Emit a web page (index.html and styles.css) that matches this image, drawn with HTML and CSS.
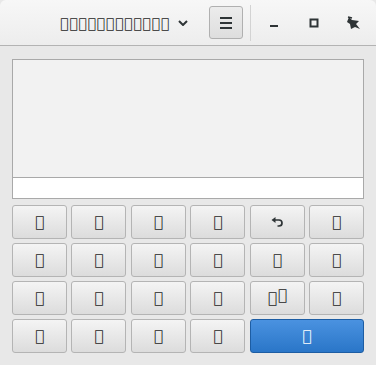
FILE: index.html
```html
<!DOCTYPE html>
<html lang="en">
<head>
    <meta charset="UTF-8">
    <title>Calculator</title>
    <link rel="stylesheet" href="styles.css">
</head>
<body>
    <div class="window">
        <header class="titlebar">
            <div class="title">&#x10FFFD;&#x10FFFD;&#x10FFFD;&#x10FFFD;&#x10FFFD;&#x10FFFD;&#x10FFFD;&#x10FFFD;&#x10FFFD;&#x10FFFD;&#x10FFFD;&#x10FFFD;</div>
            <svg class="chevron" width="10" height="6" viewBox="0 0 10 6"><path d="M1 1 L5 5 L9 1" fill="none" stroke="#2e3436" stroke-width="2"/></svg>
            <button class="menu-button">
                <svg width="12" height="12" viewBox="0 0 12 12"><path d="M0 1h12M0 6h12M0 11h12" stroke="#2e3436" stroke-width="2"/></svg>
            </button>
            <div class="separator"></div>
            <div class="controls">
                <div class="control"><svg width="10" height="10" viewBox="0 0 10 10"><rect x="1" y="7" width="8" height="2" fill="#2e3436"/></svg></div>
                <div class="control"><svg width="10" height="10" viewBox="0 0 10 10"><rect x="1.5" y="1.5" width="7" height="7" fill="none" stroke="#2e3436" stroke-width="2"/></svg></div>
                <div class="control"><svg width="15" height="14" viewBox="0 0 15 14"><path d="M3 1 L6 4 L13 5 L10 8 L14 13 L9 11 L5 13 L4 8 L1 6 Z" fill="#2e3436"/><path d="M2 1 L6 2" stroke="#2e3436" stroke-width="1.5"/></svg></div>
            </div>
        </header>

        <main class="content">
            <div class="display">
                <div class="history"></div>
                <div class="entry"></div>
            </div>

            <div class="keypad">
                <button class="key">&#x10FFFD;</button>
                <button class="key">&#x10FFFD;</button>
                <button class="key">&#x10FFFD;</button>
                <button class="key">&#x10FFFD;</button>
                <button class="key"><svg width="13" height="10" viewBox="0 0 13 10"><path d="M2.5 3 H8 A3 3 0 0 1 8 9 H6.5" fill="none" stroke="#2e3436" stroke-width="1.7"/><path d="M0.5 3 L4.5 0 L4.5 6 Z" fill="#2e3436"/></svg></button>
                <button class="key">&#x10FFFD;</button>

                <button class="key">&#x10FFFD;</button>
                <button class="key">&#x10FFFD;</button>
                <button class="key">&#x10FFFD;</button>
                <button class="key">&#x10FFFD;</button>
                <button class="key">&#x10FFFD;</button>
                <button class="key">&#x10FFFD;</button>

                <button class="key">&#x10FFFD;</button>
                <button class="key">&#x10FFFD;</button>
                <button class="key">&#x10FFFD;</button>
                <button class="key">&#x10FFFD;</button>
                <button class="key">&#x10FFFD;<sup>&#x10FFFD;</sup></button>
                <button class="key">&#x10FFFD;</button>

                <button class="key">&#x10FFFD;</button>
                <button class="key">&#x10FFFD;</button>
                <button class="key">&#x10FFFD;</button>
                <button class="key">&#x10FFFD;</button>
                <button class="key equals">&#x10FFFD;</button>
            </div>
        </main>
    </div>
</body>
</html>
```
FILE: styles.css
```css
body {
    margin: 0;
    background-color: #e8e8e8;
    font-family: 'DejaVu Sans', sans-serif;
    color: #2e3436;
}

.window {
    width: 376px;
    height: 365px;
    background-color: #e8e8e8;
    overflow: hidden;
}

.titlebar {
    height: 45px;
    display: flex;
    align-items: center;
    padding-left: 60px;
    background: linear-gradient(#f7f7f7, #ededed);
    border-bottom: 1px solid #b3b3b3;
    border-radius: 6px 6px 0 0;
    box-sizing: content-box;
}

.title {
    font-size: 14px;
    font-weight: bold;
    letter-spacing: 0.75px;
    color: #1e1e1e;
}

.chevron {
    margin-left: 8px;
}

.menu-button {
    margin-left: 21px;
    width: 34px;
    height: 33px;
    padding: 0;
    display: flex;
    align-items: center;
    justify-content: center;
    background: linear-gradient(#ececec, #dedede);
    border: 1px solid #b0b0b0;
    border-radius: 3px;
}

.separator {
    width: 1px;
    height: 36px;
    margin-left: 7px;
    background-color: #d3d3d3;
}

.controls {
    display: flex;
    margin-left: 3px;
}

.control {
    width: 40px;
    height: 30px;
    display: flex;
    align-items: center;
    justify-content: center;
}

.content {
    padding: 13px 12px 0 12px;
}

.display {
    border: 1px solid #a9a9a9;
}

.history {
    height: 117px;
    background-color: #f2f2f2;
    border-bottom: 1px solid #a9a9a9;
}

.entry {
    height: 20px;
    background-color: #fff;
}

.keypad {
    margin-top: 6px;
    display: grid;
    grid-template-columns: repeat(6, 1fr);
    grid-auto-rows: 34px;
    column-gap: 4.6px;
    row-gap: 4px;
}

.key {
    padding: 0;
    font-family: 'DejaVu Sans', sans-serif;
    font-size: 15px;
    color: #1e1e1e;
    background: linear-gradient(#f4f4f4, #dcdcdc);
    border: 1px solid #b4b4b4;
    border-radius: 3px;
    display: flex;
    align-items: center;
    justify-content: center;
}

.key sup {
    font-size: 15px;
    position: relative;
    top: -3px;
    margin-left: 1px;
}

.key.equals {
    grid-column: span 2;
    color: #fff;
    background: linear-gradient(#4a92e0, #2a76c8);
    border-color: #1d5da3;
}
```
